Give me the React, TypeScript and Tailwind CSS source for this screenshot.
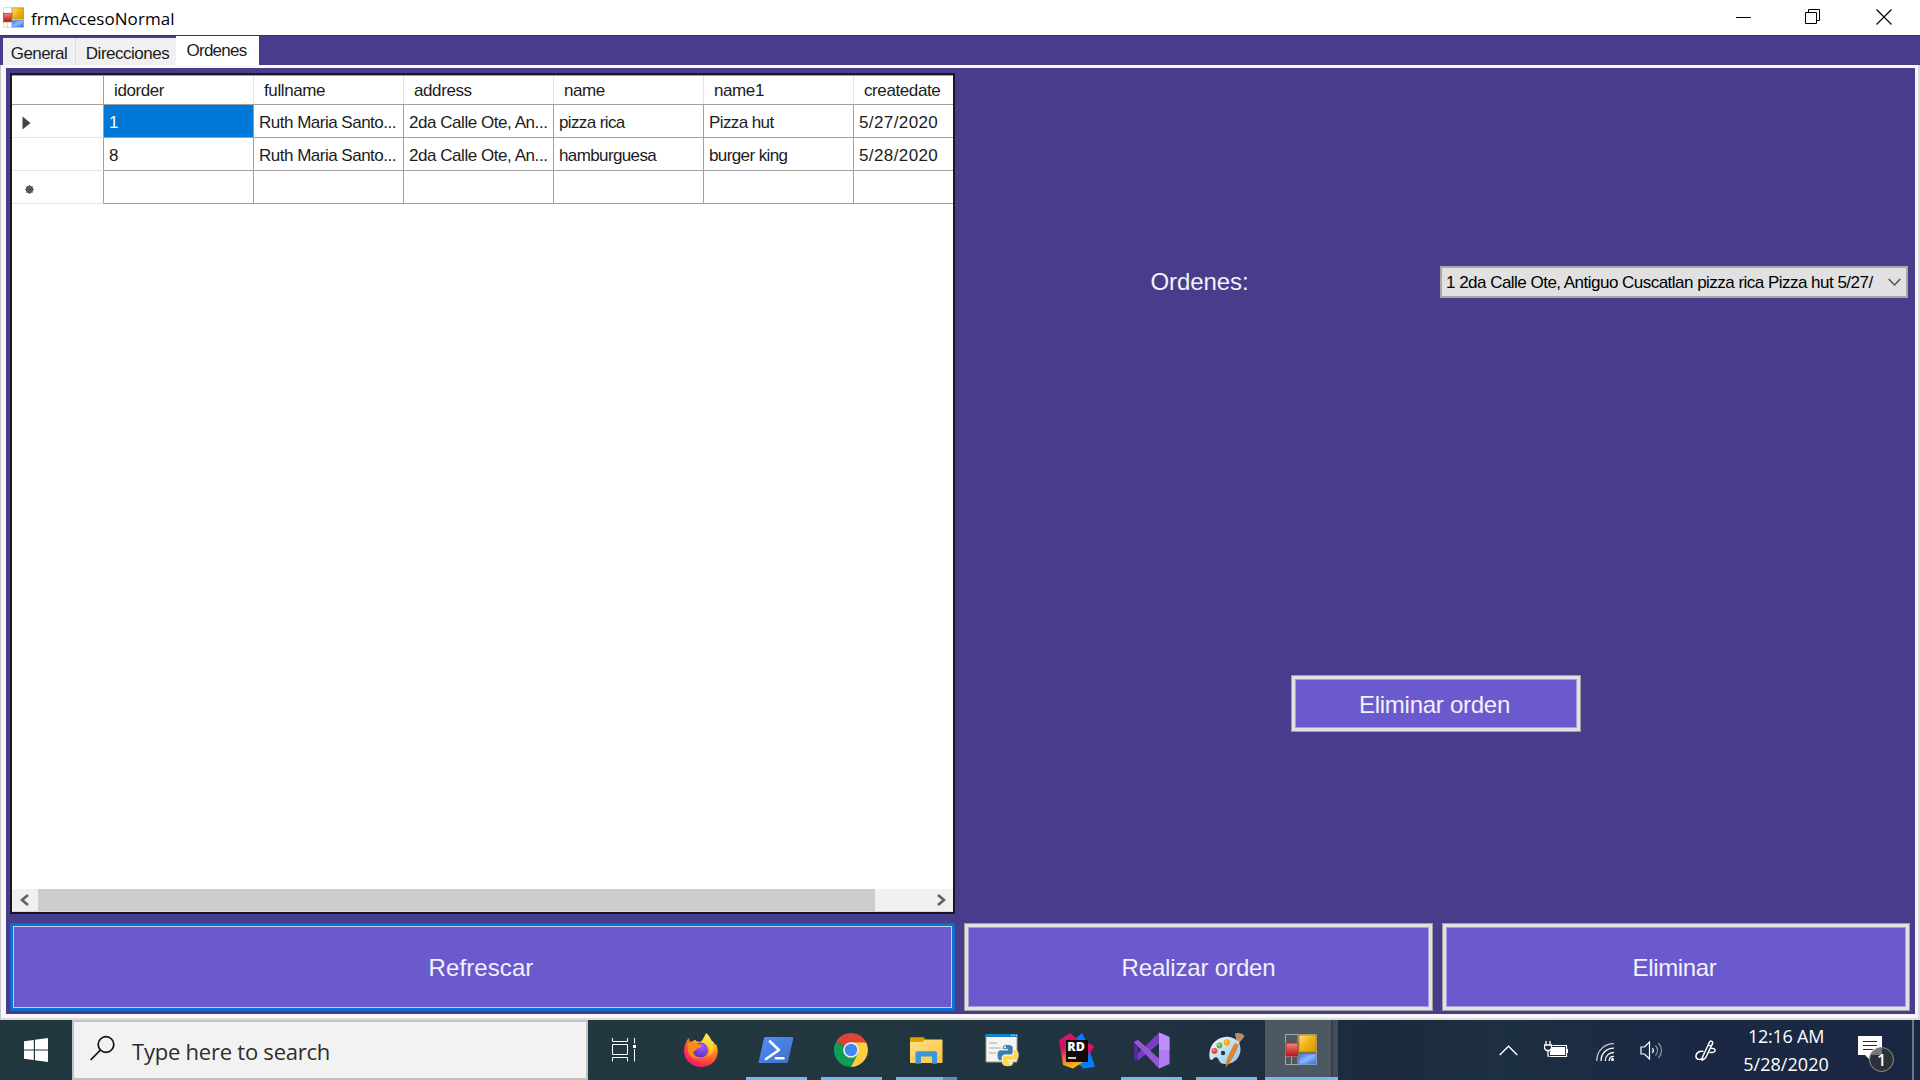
import React from "react";

const columns = ["idorder", "fullname", "address", "name", "name1", "createdate"];
const cellTracking = [
  "tracking-[-0.4px]",
  "tracking-[-0.5px]",
  "tracking-[-0.45px]",
  "tracking-[-0.62px]",
  "tracking-[-0.6px]",
  "tracking-[0.4px]",
];
const rows = [
  ["1", "Ruth Maria Santo...", "2da Calle Ote, An...", "pizza rica", "Pizza hut", "5/27/2020"],
  ["8", "Ruth Maria Santo...", "2da Calle Ote, An...", "hamburguesa", "burger king", "5/28/2020"],
  ["", "", "", "", "", ""],
];

function FormIcon({ className, line }: { className: string; line: string }) {
  return (
    <svg className={className} viewBox="0 0 32 31">
      <defs>
        <linearGradient id="fy" x1="0" y1="0" x2="1" y2="1">
          <stop offset="0" stopColor="#ffe27a" /><stop offset=".5" stopColor="#eeb211" /><stop offset="1" stopColor="#d99500" />
        </linearGradient>
        <linearGradient id="fr" x1="0" y1="0" x2="0" y2="1">
          <stop offset="0" stopColor="#f08a80" /><stop offset="1" stopColor="#b81410" />
        </linearGradient>
        <linearGradient id="fb" x1="0" y1="0" x2="1" y2="1">
          <stop offset="0" stopColor="#3a74e0" /><stop offset=".5" stopColor="#8fb8ff" /><stop offset="1" stopColor="#2c62d0" />
        </linearGradient>
      </defs>
      <path d="M.5.5h31v30H.5zM13 .5v30M.5 9.500h12M.5 22.500h12M6.500 22.500v8" fill="none" stroke={line} />
      <rect x="1" y="9" width="12" height="13" fill="url(#fr)" stroke="#b52a24" />
      <rect x="14" y="1" width="17" height="17" fill="url(#fy)" stroke="#b98a1a" />
      <rect x="14" y="20" width="17" height="10" fill="url(#fb)" stroke="#5b8be0" />
    </svg>
  );
}

function Firefox() {
  return (
    <svg className="mr-[2px] h-[36px] w-[36px]" viewBox="0 0 36 36">
      <defs>
        <radialGradient id="ff1" cx=".72" cy=".12" r="1">
          <stop offset="0" stopColor="#fff24d" /><stop offset=".3" stopColor="#ffc32a" /><stop offset=".55" stopColor="#ff7a1f" /><stop offset=".8" stopColor="#ff3350" /><stop offset="1" stopColor="#e0127a" />
        </radialGradient>
        <radialGradient id="ff2" cx=".6" cy=".3" r=".7">
          <stop offset="0" stopColor="#a45bff" /><stop offset="1" stopColor="#5b35c4" />
        </radialGradient>
      </defs>
      <path d="M23 1c4 3 4.500 6 6 8 1 0 2 1 3 4l1-1c2 4 2.500 9 .5 13.500C31 31.500 25 35 18.500 35 9 35 1 28.500 1 19c0-5 2-8 3-11l2-2 1 4 5-2c1 0 1 0 1 1l4 1c2-1 3-3 4-5 1-1 1.500-3 2-4z" fill="url(#ff1)" />
      <circle cx="17.500" cy="18" r="7.500" fill="url(#ff2)" />
      <path d="M5 11c3-2 7-1 9 1l5 1c0 2-3 3-4 3-2 1-2 3-5 4 0 5 4 6 8 5-6 4-13-1-13-7z" fill="#ff8a1c" />
      <path d="M22 9c5 3 7 10 3 15 5-2 7-8 3-14l-3-5z" fill="#ffd83a" opacity=".75" />
    </svg>
  );
}

function PowerShell() {
  return (
    <svg className="mr-[2px] h-[28px] w-[36px]" viewBox="0 0 36 28">
      <defs>
        <linearGradient id="ps" x1="0" y1="0" x2="1" y2="1"><stop offset="0" stopColor="#5391fe" /><stop offset="1" stopColor="#3e6dbf" /></linearGradient>
      </defs>
      <path d="M7 1h27.500c.6 0 1 .5.8 1.200L30 26c-.2.700-.7 1-1.400 1H1.500c-.6 0-1-.5-.8-1.200L6 2c.1-.6.4-1 1-1z" fill="url(#ps)" />
      <path d="M12 5.500l9 8.500-13 9M18 22.300h7.500" stroke="#fff" strokeWidth="2.600" fill="none" strokeLinecap="round" strokeLinejoin="round" />
    </svg>
  );
}

function Chrome() {
  return (
    <svg className="mr-[2px] h-[34px] w-[34px]" viewBox="0 0 48 48">
      <path d="M24 24L3.200 12A24 24 0 0 1 44.800 12z" fill="#db4437" />
      <path d="M24 24L3.200 12A24 24 0 0 0 24 48l10-18z" fill="#0f9d58" />
      <path d="M24 13h21.300A24 24 0 0 1 24 48l9.500-18.500z" fill="#ffcd40" />
      <path d="M24 13H45l-.3-1L24 11z" fill="#db4437" />
      <circle cx="24" cy="24" r="11" fill="#f1f1f1" />
      <circle cx="24" cy="24" r="8.800" fill="#4285f4" />
    </svg>
  );
}

function Folder() {
  return (
    <svg className="h-[27px] w-[33px]" viewBox="0 0 33 27">
      <defs><linearGradient id="fo" x1="0" y1="0" x2="1" y2="1"><stop offset="0" stopColor="#ffe08a" /><stop offset="1" stopColor="#fcc33c" /></linearGradient></defs>
      <path d="M0 1.500C0 .7.600.3 1.300.3h12c.8 0 1.400.7 1.400 1.500L15 5H0z" fill="#e0a000" />
      <path d="M0 5h12.500l2.500-2.500h16.500c.6 0 1 .4 1 1V25c0 .6-.4 1-1 1H1c-.6 0-1-.4-1-1z" fill="url(#fo)" />
      <path d="M5.500 26.700V16c0-1 .8-1.700 1.600-1.700h18.300c1 0 1.600.8 1.600 1.700v10.700h-5V19.500H11v7.200z" fill="#3a96dd" />
    </svg>
  );
}

const snake = "M16.900 1C8.900 1 9.400 4.500 9.400 4.500v3.600h7.700v1.100H6.400S1 8.600 1 17s4.700 8 4.700 8h2.700v-3.900s-.2-4.700 4.600-4.700h7.600s4.400.1 4.400-4.300V5.400S25.700 1 16.900 1z";

function PythonFile() {
  return (
    <svg className="ml-[2px] h-[35px] w-[36px]" viewBox="0 0 36 35">
      <path d="M1 2h31v27H1z" fill="#f4f4f4" stroke="#9b9b9b" />
      <path d="M.5 1h32v3H.5z" fill="#1383c8" />
      <path d="M26 2.200h1.500m1 0h1.500m1 0h1" stroke="#d7effa" />
      <path d="M4 10h8M4 15h12M4 20h7" stroke="#a9a9a9" strokeWidth="1" />
      <g transform="translate(11.500 11) scale(.66)">
        <path d={snake} fill="#3f7cab" stroke="#eef3f6" strokeWidth="1" />
        <path d={snake} fill="#ffd94d" stroke="#f8f8e8" strokeWidth="1" transform="rotate(180 17 17)" />
        <circle cx="13" cy="4.800" r="1.500" fill="#fff" /><circle cx="21" cy="29.200" r="1.500" fill="#fff" />
      </g>
    </svg>
  );
}

function Rider() {
  return (
    <svg className="h-[37px] w-[37px]" viewBox="0 0 37 37">
      <defs>
        <linearGradient id="ri" x1="0" y1="0" x2=".25" y2="1"><stop offset=".45" stopColor="#d1155f" /><stop offset=".7" stopColor="#f0653a" /><stop offset="1" stopColor="#fdb60d" /></linearGradient>
      </defs>
      <path d="M17 7l7-6 5 10 8 24-12 1.500z" fill="#087cfa" />
      <path d="M28 10l8 4-5 10z" fill="#dd1265" />
      <path d="M30 22l6 9-10 5.500-8-6z" fill="#087cfa" />
      <path d="M1 8L12 1l10 8 6 19-13 8.500L5 33z" fill="url(#ri)" />
      <rect x="8" y="8" width="22" height="22" fill="#120806" />
      <text x="9.300" y="18.800" fill="#fff" fontFamily="Open Sans, sans-serif" fontWeight="800" fontSize="12" textLength="17.500" lengthAdjust="spacingAndGlyphs">RD</text>
      <path d="M10 26h8" stroke="#fff" strokeWidth="1.600" />
    </svg>
  );
}

function VisualStudio() {
  return (
    <svg className="h-[37px] w-[37px]" viewBox="0 0 37 37">
      <path d="M26 .5L36.500 5v27L26 36.500z" fill="#b07cf4" />
      <path d="M26 .5v11L5 28.500 1 27v-2z" fill="#7b3cc4" />
      <path d="M1 10v17l4 2V8.500z" fill="#59289a" />
      <path d="M1 10l4-2.300 21 18.800v10z" fill="#9457d8" />
      <path d="M26 .5L36.500 5v13H26z" fill="#c596fa" opacity=".65" />
    </svg>
  );
}

function Paint() {
  return (
    <svg className="h-[36px] w-[37px]" viewBox="0 0 37 36">
      <defs><linearGradient id="pa" x1="0" y1="0" x2="1" y2="1"><stop offset="0" stopColor="#f3fbff" /><stop offset="1" stopColor="#8fc4e2" /></linearGradient></defs>
      <path d="M17 5c8-1 16 4 15.500 13C32 27 25 32.500 17 32c-3 0-5-1-6-3.500-.8-2-2-4-4-3-2 .8-2.500 3-4 2.500C1 27 1 22 2 18 4 10 10 6 17 5z" fill="url(#pa)" />
      <circle cx="15" cy="21" r="2.200" fill="#23384a" />
      <circle cx="6.500" cy="19" r="3" fill="#ea4a40" /><circle cx="11.500" cy="13.500" r="3" fill="#62b846" /><circle cx="19" cy="10.500" r="3.200" fill="#fbab17" />
      <circle cx="5.800" cy="18" r="1" fill="#ffb0a8" /><circle cx="10.800" cy="12.700" r="1" fill="#b8e8a0" /><circle cx="18.200" cy="9.500" r="1.100" fill="#ffe08a" />
      <path d="M27.500 11l3 1.500c-3 8-7 16-12.500 22.500-.5-5 5-17 9.500-24z" fill="#e78527" stroke="#b86216" strokeWidth=".5" />
      <path d="M28 7l4 2.500-1.500 3.500-3-1.500z" fill="#cfd3d6" />
      <path d="M27 1.500c3-1.500 8 0 9.500 2.500-1 2-3 4-4.500 6l-4-2.500c.5-2.500-1.500-4-1-6z" fill="#b98d63" />
    </svg>
  );
}

function TaskView() {
  return (
    <svg className="h-[24px] w-[25px]" viewBox="0 0 25 24" fill="none" stroke="#fff">
      <path d="M.5 0v3.500h15V0M.5 6.500h15v10H.5zM.5 23.500v-4h15v4M22.500 0v5.500M22.500 11v12.500" />
      <path d="M21 7h3v3h-3z" fill="#fff" stroke="none" />
    </svg>
  );
}

function WinButton({ label, className, inner, text }: { label: string; className: string; inner: string; text: string }) {
  return (
    <button className={`flex border ${className}`}>
      <span className={`flex h-full w-full items-center justify-center border bg-[#6a5acd] text-[#f2f0fb] ${inner}`}>
        <span className={`mt-[2px] whitespace-pre text-[24px] leading-none ${text}`}>{label}</span>
      </span>
    </button>
  );
}

const apps = [
  { icon: <Firefox />, bar: "" },
  { icon: <PowerShell />, bar: "full" },
  { icon: <Chrome />, bar: "full" },
  { icon: <Folder />, bar: "split" },
  { icon: <PythonFile />, bar: "" },
  { icon: <Rider />, bar: "" },
  { icon: <VisualStudio />, bar: "full" },
  { icon: <Paint />, bar: "full" },
];

function Taskbar() {
  return (
    <footer className="flex h-[60px] w-full bg-[linear-gradient(90deg,#20373f_0%,#22373f_38%,#20333f_60%,#1c2b3f_72%,#1d2f42_78%,#1a2844_88%,#1a2743_100%)] font-['Open_Sans',sans-serif]">
      <div className="flex w-[72px] items-center justify-center">
        <svg className="h-6 w-6" viewBox="0 0 24 24" fill="#fff"><path d="M0 3.300L9.800 2v9.500H0zM11 1.800L24 0v11.500H11zM0 12.500h9.800V22L0 20.700zM11 12.500h13V24l-13-1.800z" /></svg>
      </div>
      <div className="flex w-[516px] items-center border-2 border-[#c2c2c2] bg-[#f2f2f2] pl-4">
        <svg className="mb-1 h-[26px] w-[26px]" viewBox="0 0 26 26" fill="none" stroke="#111" strokeWidth="1.700"><circle cx="16" cy="9.500" r="7.800" /><path d="M10.500 15L.7 24.800" /></svg>
        <span className="ml-[16px] mt-[2px] whitespace-nowrap text-[22px] tracking-[-0.23px] text-[#2d2d2d]">Type here to search</span>
      </div>
      <div className="flex w-[76px] items-center justify-center pr-1"><TaskView /></div>
      {apps.map((a, i) => (
        <div key={i} className="flex w-[75px] flex-col items-center">
          <div className="flex h-[57px] items-center pt-[3px]">{a.icon}</div>
          {a.bar === "full" && <div className="h-[3px] w-[61px] bg-[#76b9ed]" />}
          {a.bar === "split" && <div className="flex h-[3px] w-[61px]"><div className="w-[47px] bg-[#76b9ed]" /><div className="w-[14px] bg-[#5b8fbb]" /></div>}
        </div>
      ))}
      <div className="ml-px flex w-[73px] flex-col bg-[#4c5963]">
        <div className="flex h-[57px]">
          <div className="flex w-[66px] items-center pl-5 pt-px"><FormIcon className="h-[31px] w-8" line="#a3a7aa" /></div>
          <div className="w-[7px] border-l-2 border-[#333f4a] bg-[#414e5a]" />
        </div>
        <div className="h-[3px] bg-[#76b9ed]" />
      </div>
      <div className="ml-auto flex items-center text-white">
        <svg className="h-[11px] w-[19px]" viewBox="0 0 19 11" fill="none" stroke="#fff" strokeWidth="1.400"><path d="M.7 10L9.500 1.200 18.300 10" /></svg>
        <svg className="ml-[26px] h-[18px] w-[24px]" viewBox="0 0 24 18" fill="none" stroke="#fff"><path d="M8.500 4.500h14v11H5.500M23.500 8v4" strokeWidth="1.200" /><path d="M8 6h13v8H6v-3z" fill="#fff" stroke="none" /><path d="M2 0v4M6 0v4M.5 4h7v3.500L5.500 9.500h-3l-2-2zM4 9.500V16" strokeWidth="1.300" fill="#1b2944" /></svg>
        <svg className="ml-[28px] mt-[3px] h-[18px] w-[18px]" viewBox="0 0 18 18" fill="none" stroke="#fff" strokeWidth="1.300"><path d="M.7 18C.7 8 8 .7 18 .7" opacity=".75" /><path d="M5 18C5 10.500 10.500 5.200 18 5.200M9.200 18c0-5 3.800-8.500 8.800-8.500" /><path d="M13.200 18c0-3 1.800-4.600 4.800-4.600" /><circle cx="16.500" cy="16.500" r="1.500" fill="#fff" stroke="none" /></svg>
        <svg className="ml-[26px] h-[19px] w-[23px]" viewBox="0 0 23 19" fill="none" stroke="#fff" strokeWidth="1.200"><path d="M1 6h3.500l5-5v17l-5-5H1z" /><path d="M12.500 7c1 1.500 1 3.500 0 5" /><path d="M15.500 4.500c2.500 3 2.500 7 0 10M18.500 2c4 4.500 4 10.500 0 15" opacity=".5" /></svg>
        <svg className="ml-[32px] h-[21px] w-[21px]" viewBox="0 0 21 21" fill="none" stroke="#fff" strokeWidth="1.500"><path d="M7.500 17L14.500 2.200c1-2 4-.8 3 1.500L10.500 18l-3.200 2.200zM13 4.500L16.200 6M8.500 11.500C4.500 10.500.9 13 .9 16c0 4 5.100 4.500 7.100 1.500M14.500 12.500c2 .3 5.600 0 5.600-2s-2-2.200-4-2.200" /></svg>
        <div className="ml-[26px] mr-[2px] flex w-[88px] flex-col items-center text-[18px] leading-[28px]">
          <span className="whitespace-nowrap tracking-[-0.25px]">12:16 AM</span>
          <span className="whitespace-nowrap tracking-[0.05px]">5/28/2020</span>
        </div>
        <svg className="ml-[26px] mt-[7px] h-[38px] w-[37px]" viewBox="0 0 37 38"><path d="M0 1h24v19H12v5l-5-5H0z" fill="#fff" /><path d="M5 6.500h14M5 10.500h14M5 14.500h10" stroke="#1b2944" strokeWidth="1.100" /><circle cx="23.500" cy="24.500" r="12" fill="#2d3138" stroke="#8b9097" /><path d="M12 20a12 12 0 0 1 12-7v7z" fill="#888" opacity=".8" /><text x="23.500" y="30.500" fill="#fff" textAnchor="middle" fontFamily="Open Sans, sans-serif" fontSize="16" fontWeight="600">1</text></svg>
        <div className="ml-[17px] h-[60px] w-2 border-l-2 border-[#6d7789]" />
      </div>
    </footer>
  );
}

export default function App() {
  return (
    <div className="flex h-[1080px] w-[1920px] flex-col overflow-hidden bg-white font-['Liberation_Sans',sans-serif] text-[#1c1c1c]">
      <header className="flex h-[35px] items-center bg-white pl-[3px] font-['Open_Sans',sans-serif]">
        <FormIcon className="h-[21px] w-[21px]" line="#c4c4c4" />
        <span className="ml-[7px] mt-[2px] text-[17px] tracking-[0.05px] text-black">frmAccesoNormal</span>
        <div className="ml-auto flex items-center pr-7 pb-[2px]">
          <svg className="h-4 w-4" viewBox="0 0 16 16"><path d="M0 8.500h15" stroke="#000" /></svg>
          <svg className="ml-[53px] h-4 w-4" viewBox="0 0 16 16" fill="none" stroke="#000"><path d="M.5 3.500h11v11H.5zM3.500 3.500V.5h11v11h-3" /></svg>
          <svg className="ml-[55px] h-4 w-4" viewBox="0 0 16 16" stroke="#000" strokeWidth="1.200"><path d="M.5.5l15 15M15.500.5l-15 15" /></svg>
        </div>
      </header>

      <nav className="flex h-[30px] items-end border-t border-[#3a2f70] bg-[#483d8b] pl-[3px] text-[17px] leading-none">
        <div className="flex h-[27px] w-[73px] justify-center border-r border-[#dcdcdc] bg-[#f0f0f0] pt-[7px]"><span className="tracking-[-0.6px]">General</span></div>
        <div className="flex h-[27px] w-[100px] justify-center bg-[#f0f0f0] pl-[3px] pt-[7px]"><span className="tracking-[-0.5px]">Direcciones</span></div>
        <div className="flex h-[29px] w-[83px] justify-center bg-white pr-[2px] pt-[6px]"><span className="tracking-[-0.75px]">Ordenes</span></div>
      </nav>

      <main className="flex h-[955px] flex-col border-b-2 border-l border-r-2 border-b-[#dcdcdc] border-l-[#c8c8c8] border-r-[#dcdcdc] bg-[#f8f8fa] pb-[4px] pl-[5px] pr-[3px] pt-[3px]">
        <div className="flex min-h-0 flex-1 flex-col bg-[#483d8b] pl-[4px] pr-[5px] pt-[5px]">
          <div className="flex h-[841px]">
            <section className="flex w-[945px] flex-col overflow-hidden border-2 border-[#181528] bg-white">
              <div className="flex h-[30px] shrink-0 border-b border-t border-[#a0a0a0] text-[17px]">
                <div className="w-[92px] shrink-0 border-r border-[#a0a0a0]" />
                {columns.map((c) => (
                  <div key={c} className="flex w-[150px] shrink-0 items-center border-r border-[#e4e4e4] pl-[10px] pt-px"><span className="tracking-[-0.4px]">{c}</span></div>
                ))}
              </div>
              {rows.map((r, i) => (
                <div key={i} className="flex h-[33px] shrink-0 text-[17px]">
                  <div className="flex w-[92px] shrink-0 items-center border-b border-r border-b-[#e4e4e4] border-r-[#a0a0a0] pl-[10px]">
                    {i === 0 && <svg className="mt-[3px] h-[14px] w-[9px]" viewBox="0 0 9 14"><path d="M.5.5v13L8.500 7z" fill="#444" /></svg>}
                    {i === 2 && <svg className="ml-[3px] mt-[4px] h-[9px] w-[9px]" viewBox="0 0 9 9"><circle cx="4.500" cy="4.500" r="3.700" fill="#555" /><path d="M4.500 0v9M0 4.500h9M1.500 1.500l6 6M7.500 1.500l-6 6" stroke="#555" /></svg>}
                  </div>
                  {r.map((v, j) => (
                    <div key={j} className={`flex w-[150px] shrink-0 items-center border-b border-r border-[#a0a0a0] pl-[5px] pt-[3px] ${i === 0 && j === 0 ? "bg-[#0078d7] text-white" : ""}`}>
                      <span className={`whitespace-nowrap ${cellTracking[j]}`}>{v}</span>
                    </div>
                  ))}
                </div>
              ))}
              <div className="mt-auto flex h-[23px] items-center border-b border-[#d8d8d8] bg-[#f0f0f0]">
                <div className="flex w-[26px] justify-center pr-px"><svg className="h-3 w-[9px]" viewBox="0 0 9 12" fill="none" stroke="#606060" strokeWidth="2.600"><path d="M8 1L2 6l6 5" /></svg></div>
                <div className="h-full w-[837px] bg-[#cdcdcd]" />
                <div className="ml-auto flex w-6 justify-center"><svg className="h-3 w-[9px]" viewBox="0 0 9 12" fill="none" stroke="#606060" strokeWidth="2.600"><path d="M1 1l6 5-6 5" /></svg></div>
              </div>
            </section>
            <section className="flex flex-1 flex-col pl-[9px]">
              <div className="flex h-[418px] items-center">
                <div className="flex w-[476px] justify-center pr-[5px]"><span className="text-[24px] tracking-[-0.1px] text-[#f2f0fb]">Ordenes:</span></div>
                <div className="flex h-8 w-[468px] items-center border-2 border-[#a8a8a8] bg-[#e1e1e1] pl-1 pr-[5px] text-black">
                  <span className="mt-[2px] whitespace-nowrap text-[17px] tracking-[-0.52px]">1 2da Calle Ote, Antiguo Cuscatlan pizza rica Pizza hut 5/27/</span>
                  <svg className="ml-auto mt-px h-[9px] w-[13px] shrink-0" viewBox="0 0 13 9" fill="none" stroke="#505050" strokeWidth="1.500"><path d="M.7 1l5.800 6L12.300 1" /></svg>
                </div>
              </div>
              <div className="flex h-[423px] items-center justify-center pr-[2px] pt-[2px]">
                <WinButton label="Eliminar orden" className="h-[57px] w-[290px] border-[#a09fa4] bg-[#e1e1e1] p-[3px]" inner="border-[#a69ddd]" text="mr-[3px] tracking-[-0.26px]" />
              </div>
            </section>
          </div>
          <div className="mt-[9px] flex h-[88px]">
            <WinButton label="Refrescar" className="w-[945px] border-[#1c63bd] bg-[#0078d7] p-[2px]" inner="border-[#c9cbe8]" text="mr-[3px] tracking-[0.1px]" />
            <WinButton label="Realizar orden" className="ml-[9px] w-[469px] border-[#a09fa4] bg-[#e1e1e1] p-[3px]" inner="border-[#a69ddd]" text="tracking-[-0.15px]" />
            <WinButton label="Eliminar" className="ml-[9px] w-[468px] border-[#a09fa4] bg-[#e1e1e1] p-[3px]" inner="border-[#a69ddd]" text="mr-[3px] tracking-[-0.35px]" />
          </div>
        </div>
      </main>
      <Taskbar />
    </div>
  );
}
